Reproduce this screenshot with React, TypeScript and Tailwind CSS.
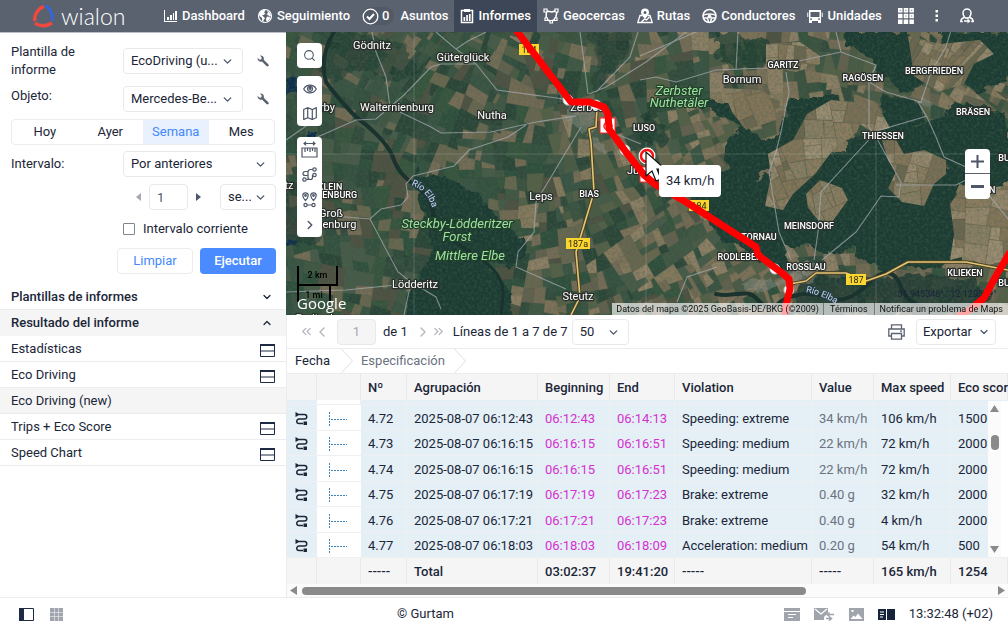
import { useState } from "react";
import type { ReactNode } from "react";
import { ChevronDown, ChevronUp, ChevronLeft, ChevronRight, ChevronsLeft, ChevronsRight, Search } from "lucide-react";

interface NavItem {
  label: string;
  icon: ReactNode;
  count?: number;
}

interface Row {
  no: string;
  time: string;
  start: string;
  end: string;
  violation: string;
  value: string;
  speed: string;
  score: string;
}

interface MapLabel {
  text: string;
  x: number;
  y: number;
  kind: "town" | "district" | "park";
}

const rows: Row[] = [
  { no: "4.72", time: "2025-08-07 06:12:43", start: "06:12:43", end: "06:14:13", violation: "Speeding: extreme", value: "34 km/h", speed: "106 km/h", score: "1500" },
  { no: "4.73", time: "2025-08-07 06:16:15", start: "06:16:15", end: "06:16:51", violation: "Speeding: medium", value: "22 km/h", speed: "72 km/h", score: "2000" },
  { no: "4.74", time: "2025-08-07 06:16:15", start: "06:16:15", end: "06:16:51", violation: "Speeding: medium", value: "22 km/h", speed: "72 km/h", score: "2000" },
  { no: "4.75", time: "2025-08-07 06:17:19", start: "06:17:19", end: "06:17:23", violation: "Brake: extreme", value: "0.40 g", speed: "32 km/h", score: "2000" },
  { no: "4.76", time: "2025-08-07 06:17:21", start: "06:17:21", end: "06:17:23", violation: "Brake: extreme", value: "0.40 g", speed: "4 km/h", score: "2000" },
  { no: "4.77", time: "2025-08-07 06:18:03", start: "06:18:03", end: "06:18:09", violation: "Acceleration: medium", value: "0.20 g", speed: "54 km/h", score: "500" },
];

const headings = ["Nº", "Agrupación", "Beginning", "End", "Violation", "Value", "Max speed", "Eco score"];
const totals = ["-----", "Total", "03:02:37", "19:41:20", "-----", "-----", "165 km/h", "1254"];

const navItems: NavItem[] = [
  {
    label: "Dashboard",
    icon: (
      <svg width="14" height="14" viewBox="0 0 14 14" fill="currentColor">
        <path d="M0 1h1v11h12v1H0z" />
        <path d="M3 8h2v3H3zM6 6h2v5H6zM9 4h1v7H9zM11 2h2v9h-2z" />
      </svg>
    ),
  },
  {
    label: "Seguimiento",
    icon: (
      <svg width="16" height="16" viewBox="0 0 16 16">
        <circle cx="8" cy="8" r="6.5" fill="none" stroke="currentColor" strokeWidth="1.2" />
        <path
          fill="currentColor"
          d="M2 6l2-3 3-1.5 1.5 1L7 4.5 8.500 5.500 6.500 7 5 7.500 7 9 8 10.500 6.500 12v2L5 12.500V10L2.500 8zM10 2.500l3 2.500 1 3-1.500.5L11 7 9.500 6.500 11 5zM10 8.500l2.500.5 1 1-2.500 3-1.500.5-.5-2.500z"
        />
      </svg>
    ),
  },
  {
    label: "Asuntos",
    count: 0,
    icon: (
      <svg width="17" height="17" viewBox="0 0 17 17" fill="none" stroke="currentColor">
        <circle cx="8.5" cy="8.500" r="7.300" strokeWidth="1.300" />
        <path d="M5 8.500l2.500 2.500L12 6" strokeWidth="2" />
      </svg>
    ),
  },
  {
    label: "Informes",
    icon: (
      <svg width="14" height="16" viewBox="0 0 14 16">
        <path fill="none" stroke="currentColor" strokeWidth="1.500" d="M1.500 2.500h11v12h-11z" />
        <path fill="currentColor" d="M4 1h6v3H4zM3.500 9h1.700v4H3.500zM6.200 7h1.700v6H6.200zM8.900 6h1.700v7H8.900z" />
      </svg>
    ),
  },
  {
    label: "Geocercas",
    icon: (
      <svg width="16" height="16" viewBox="0 0 16 16" fill="none" stroke="currentColor">
        <path strokeWidth="1.500" d="M3.500 3L9 4l4-1.500 1 1L12.500 11 8 13.500 3 11z" />
        <path strokeWidth="1.200" fill="#5a6270" d="M1 1h3v3H1zM12 1h3v3h-3zM2 10h2.500v2.500H2zM11.500 10H14v2.500h-2.500zM7 12.500h2.500V15H7z" />
      </svg>
    ),
  },
  {
    label: "Rutas",
    icon: (
      <svg width="16" height="16" viewBox="0 0 16 16" fill="none" stroke="currentColor">
        <path strokeWidth="1.300" d="M5 7.500H3L.8 14.500h14.400L13 7.500h-2M4.500 14l3-3 2 1 3-3" />
        <path fill="currentColor" stroke="none" fillRule="evenodd" d="M8 .5a4 4 0 014 4C12 7 8 11 8 11S4 7 4 4.500a4 4 0 014-4zM8 3a1.500 1.500 0 100 3 1.500 1.500 0 000-3z" />
      </svg>
    ),
  },
  {
    label: "Conductores",
    icon: (
      <svg width="15" height="16" viewBox="0 0 15 16" fill="none" stroke="currentColor">
        <circle cx="7.500" cy="8" r="6.500" strokeWidth="1.600" />
        <path strokeWidth="1.500" d="M1 7.500c3-2 10-2 13 0M2 10h3.500l1 4M13 10H9.500l-1 4" />
        <circle cx="7.500" cy="8.500" r="1.500" fill="currentColor" />
      </svg>
    ),
  },
  {
    label: "Unidades",
    icon: (
      <svg width="16" height="16" viewBox="0 0 16 16" fill="currentColor">
        <path fillRule="evenodd" d="M2 2h12v11H2zM3.500 4v5h9V4zM3 10.500v1.200h2v-1.200zM11 10.500v1.200h2v-1.200z" />
        <path d="M2 12h3v3H2zM11 12h3v3h-3zM.3 4.500h1V9h-1zM14.700 4.500h1V9h-1z" />
      </svg>
    ),
  },
];

const results = [
  { label: "Estadísticas", split: true },
  { label: "Eco Driving", split: true },
  { label: "Eco Driving (new)", split: false },
  { label: "Trips + Eco Score", split: true },
  { label: "Speed Chart", split: true },
];

const labels: MapLabel[] = [
  { text: "Gödnitz", x: 86, y: 17, kind: "town" },
  { text: "Güterglück", x: 177, y: 29, kind: "town" },
  { text: "Walternienburg", x: 111, y: 79, kind: "town" },
  { text: "Barby", x: 35, y: 79, kind: "town" },
  { text: "Nutha", x: 206, y: 87, kind: "town" },
  { text: "Leps", x: 255, y: 168, kind: "town" },
  { text: "Zerbst", x: 300, y: 79, kind: "town" },
  { text: "Jütrichau", x: 364, y: 142, kind: "town" },
  { text: "Groß", x: 45, y: 185, kind: "town" },
  { text: "Rosenburg", x: 44, y: 196, kind: "town" },
  { text: "Lödderitz", x: 129, y: 256, kind: "town" },
  { text: "Steutz", x: 292, y: 268, kind: "town" },
  { text: "Bornum", x: 456, y: 51, kind: "town" },
  { text: "Breitenhagen", x: 42, y: 290, kind: "town" },
  { text: "tz", x: 3, y: 157, kind: "town" },
  { text: "BIAS", x: 303, y: 165, kind: "district" },
  { text: "LUSO", x: 358, y: 99, kind: "district" },
  { text: "KLEIN", x: 44, y: 158, kind: "district" },
  { text: "ROSENBURG", x: 45, y: 166, kind: "district" },
  { text: "GARITZ", x: 497, y: 36, kind: "district" },
  { text: "RAGÖSEN", x: 577, y: 49, kind: "district" },
  { text: "BERGFRIEDEN", x: 648, y: 42, kind: "district" },
  { text: "BRÄSEN", x: 687, y: 83, kind: "district" },
  { text: "THIESSEN", x: 597, y: 107, kind: "district" },
  { text: "MEINSDORF", x: 523, y: 197, kind: "district" },
  { text: "TORNAU", x: 473, y: 208, kind: "district" },
  { text: "RODLEBEN", x: 454, y: 228, kind: "district" },
  { text: "ROSSLAU", x: 520, y: 238, kind: "district" },
  { text: "KLIEKEN", x: 679, y: 244, kind: "district" },
  { text: "BUKO", x: 724, y: 129, kind: "district" },
  { text: "DÜBEN", x: 695, y: 161, kind: "district" },
  { text: "BURO", x: 724, y: 254, kind: "district" },
  { text: "Zerbster", x: 393, y: 63, kind: "park" },
  { text: "Nuthetäler", x: 393, y: 75, kind: "park" },
  { text: "Steckby-Lödderitzer", x: 171, y: 196, kind: "park" },
  { text: "Forst", x: 171, y: 209, kind: "park" },
  { text: "Mittlere Elbe", x: 184, y: 228, kind: "park" },
];

const roads = [
  "M86 0l4 20 10 25 4 30",
  "M20 110l50-22 20-1 14-12 14-12 27-28 10-3h35l21 26 74 10 20 3",
  "M150 0l20 17 20 15M170 17l12-8L200 0",
  "M104 75l16 8 25 12 10 6 50-1 45-10 40-6",
  "M240 93l-18 12-39 13-15 16-41 10-7 8 2 13-7 8-20 4-11 10-49-4",
  "M84 187l28 53 13 10-7 33M125 250l25 15 5 12",
  "M295 95l-33 55-12 20-2 30-16 20-2 15 50 22",
  "M0 260l60-2 50-5",
  "M303 62l17-7 40-25 40-30M302 62l-4-32-4-30M310 60l34-35 8-25",
  "M0 108l36-25",
  "M354 48l16-3 20 5 40-12 50-2 75-16 35 13-7 17v45l4 5 54-16",
  "M590 100l-55 60-3 40-4 28",
  "M590 33l-7 17 17 10 35 10 10-30 15-25 12-40",
  "M641 85l9 20 8 20 22 10 42 52",
  "M590 105l25 45-2 15-18-1-25 36-34 28",
  "M500 40l3 20-8 40-5 20-7 20 10 60 12 28",
  "M550 0l5 20M354 24L410 0",
  "M610 153h60l20-10M636 71l-4-1 9 15",
  "M325 100l30 12M450 38l2-38M431 235l-30 10-10 25",
];

// Small seeded generator so the fields stay the same on every render
function makeRandom(seed: number) {
  let s = seed;
  return () => {
    s = (s * 1664525 + 1013904223) % 4294967296;
    return s / 4294967296;
  };
}

type Point = [number, number];
type Field = { points: string; fill: string };

const darkFields = ["#324a3c", "#2b4537", "#3a5343", "#415743", "#2f4f3c", "#485a48", "#37543d", "#6a674f", "#776c56", "#4f5141", "#35503f"];
const lightFields = ["#87795d", "#756a53", "#8f7f65", "#3c523f", "#4b5a44", "#7f7158", "#64614e", "#566047"];
const tanFields = ["#8c7c60", "#96866b", "#857559", "#7c6f56", "#9c8c71", "#8a7e63", "#6d6750"];

function splitField(poly: Point[], size: number, rnd: () => number, pick: (x: number) => string[], out: Field[]) {
  if (poly.length < 3) return;
  const xs = poly.map((p) => p[0]);
  const ys = poly.map((p) => p[1]);
  const w = Math.max(...xs) - Math.min(...xs);
  const h = Math.max(...ys) - Math.min(...ys);
  const cx = xs.reduce((a, b) => a + b, 0) / xs.length;
  const cy = ys.reduce((a, b) => a + b, 0) / ys.length;
  if (Math.max(w, h) < size * (0.6 + rnd() * 1.2)) {
    const palette = pick(cx);
    out.push({
      points: poly.map((p) => p[0].toFixed(1) + "," + p[1].toFixed(1)).join(" "),
      fill: palette[Math.floor(rnd() * palette.length)],
    });
    return;
  }
  const tilt = 0.35 * Math.sin(cx / 90) + 0.25 * Math.cos(cy / 60);
  const angle = (w > h * (0.7 + rnd() * 0.5) ? Math.PI / 2 : 0) + tilt + (rnd() - 0.5) * 0.4;
  const dx = Math.cos(angle);
  const dy = Math.sin(angle);
  const ox = cx + (rnd() - 0.5) * w * 0.35;
  const oy = cy + (rnd() - 0.5) * h * 0.35;
  const side = (p: Point) => (p[0] - ox) * dy - (p[1] - oy) * dx;
  const a: Point[] = [];
  const b: Point[] = [];
  poly.forEach((p, i) => {
    const q = poly[(i + 1) % poly.length];
    const sp = side(p);
    const sq = side(q);
    (sp >= 0 ? a : b).push(p);
    if (sp >= 0 !== sq >= 0) {
      const t = sp / (sp - sq);
      const m: Point = [p[0] + (q[0] - p[0]) * t, p[1] + (q[1] - p[1]) * t];
      a.push(m);
      b.push(m);
    }
  });
  splitField(a, size, rnd, pick, out);
  splitField(b, size, rnd, pick, out);
}

const bounds: Point[] = [[-10, -10], [732, -10], [732, 293], [-10, 293]];

const fields: Field[] = [];
const fieldRandom = makeRandom(41);
splitField(
  bounds,
  17,
  fieldRandom,
  (x) => (x > 215 && fieldRandom() < (x > 400 ? 0.75 : 0.4) ? lightFields : darkFields),
  fields
);

const clearings: Field[] = [];
splitField(bounds, 22, makeRandom(7), () => tanFields, clearings);

const labelStyles = {
  town: "fill-white stroke-[#2a2f2b] text-[11px]",
  district: "fill-white stroke-[#2a2f2b] text-[9px] font-medium",
  park: "fill-[#9be29f] stroke-[#23402b] text-[13px] italic",
};

function Terrain() {
  return (
    <svg className="h-full w-full" viewBox="0 0 722 283" preserveAspectRatio="xMidYMid slice" aria-label="Mapa">
      <defs>
        <filter id="rough" x="-5%" y="-5%" width="110%" height="110%">
          <feTurbulence type="fractalNoise" baseFrequency="0.07" numOctaves="3" seed="4" result="n" />
          <feDisplacementMap in="SourceGraphic" in2="n" scale="16" xChannelSelector="R" yChannelSelector="G" />
        </filter>
        <filter id="grain" x="0" y="0" width="100%" height="100%">
          <feTurbulence type="fractalNoise" baseFrequency="0.35" numOctaves="3" seed="8" />
          <feColorMatrix values="0 0 0 0 0.06  0 0 0 0 0.13  0 0 0 0 0.09  0 1.6 0 0 -0.6" />
        </filter>
        <clipPath id="clearing">
          <path d="M482 122l25-14 14-26 24-14 24 2 8 14-6 16-24 18-18 24-22 20-10 16-18-4 6-30z" />
          <path d="M596 108l14 0 8 14 20-4 22 10 0 14-12 10-10 22-22-4-14-14 8-16-8-12z" />
          <path d="M520 162l14-14 22 8 6 12-16 22-14-2-10-12z" />
          <path d="M664 172l10-14 48-4v74l-24 6-18-10-16 4 4-26z" />
          <path d="M480 12l34-2 20 14 0 8-24 8-30-6z" />
          <path d="M568 62l22 8 14 26-18 4-18-12z" />
          <path d="M622 4l32 8 40-4 14 14-20 10-10 20-26 8-24-16z" />
          <path d="M436 56l38 2 20 12-4 18-30 10-14-18z" />
        </clipPath>
      </defs>
      <rect width="722" height="283" fill="#33483a" />
      <g>
        {fields.map((f, i) => (
          <polygon key={i} points={f.points} fill={f.fill} stroke={f.fill} strokeWidth="0.4" />
        ))}
      </g>
      <g filter="url(#rough)" fill="#1d3a31">
        <path d="M55 0l60 10 20 30-30 10-30-15-30 20L30 30z" opacity=".6" />
        <path d="M128 140l45 10 35 28 10 38-15 15 20 30 5 30H118l10-40 20-30-10-40z" />
        <path d="M205 195l25 5 10 18-14 20-20-10z" />
        <path d="M0 150l26 10 8 50-34 5z" opacity=".5" />
        <path d="M300 0h50l-15 30-20 30-12-5 10-30z" opacity=".5" />
        <path d="M425 65l28 8 12 18-10 4-22-12-20-10z" />
        <path d="M455 95l35 20-5 20-16 14 12 30 16 25 8 40-30-15-40-25-30-35 6-20 30-10-5-25z" />
        <path d="M505 65l40 0 20 10-10 25-30 10-25 20-30 15 5-30 20-15z" />
        <path d="M560 0h60l15 12 12 40-30 8-20-15-10-20-25-10z" />
        <path d="M655 0h67v50l-30 8-30-15z" />
        <path d="M430 0l40 5 30 20-30 12-40-10z" opacity=".7" />
        <path d="M600 62l30 8 10 20-40 15-12-12z" />
        <path d="M645 100l22-30 55 10v75l-40 2-22-14z" />
        <path d="M560 110l90-20 15 30-12 15-28-10-50 25z" />
        <path d="M470 150l50-25 50-10 30 30 0 40-20 25-30 10-60-10-8-25z" />
        <path d="M590 130l80 10 5 60 0 30-80 8-25-15 0-45z" />
        <path d="M515 240l60 10 50-8 60 4 20 20-30 17H505z" opacity=".85" />
        <path d="M355 85l30 5-10 25-20-10z" opacity=".7" />
      </g>
      <g clipPath="url(#clearing)" strokeWidth="0.4">
        {clearings.map((f, i) => (
          <polygon key={i} points={f.points} fill={f.fill} stroke="#6b634b" />
        ))}
      </g>
      <path filter="url(#rough)" fill="#0d2f4c" d="M0 45l10 4 2 10-6 8-8-4zM22 100h10v8H22zM0 205l12 6-12 4z" />
      <g fill="#8b8f88" opacity=".5" filter="url(#rough)">
        <path d="M283 72l12-4 12 8 4 22-6 10-8-12-14-8zM305 105l10 2 8 14-12-2zM270 48l12 20-8 2z" />
        <path d="M496 238l22-8 24 2-6 10-34 14zM455 255l30-12 20 4-30 14zM637 64l8 4-2 8-8-2z" />
      </g>
      <rect width="722" height="283" filter="url(#grain)" opacity=".6" />
      <g fill="none" stroke="#1b332f" strokeLinejoin="round" strokeLinecap="round">
        <path strokeWidth="4" d="M48 0c-12 20-12 36-8 50 10 14 20 25 30 35 14 10 30 25 36 38 5 15 12 22 22 30 12 8 18 14 19 30" />
        <path strokeWidth="3" d="M147 180c4 20 22 30 40 42 16 10 30 20 30 40l-2 22" />
        <path strokeWidth="4" d="M430 262c20 4 30-6 40 4s14 14 22 6 30-14 46-7 32 0 45-14 26-14 32 4 30 28 60 22" />
      </g>
      <g fill="none" stroke="#a9adb3" strokeWidth="1.100" opacity=".7">
        {roads.map((d) => (
          <path key={d} d={d} />
        ))}
      </g>
      <path d="M128 0v283M360 110v173M590 100v183M0 122h722" stroke="#d5dcd5" strokeWidth=".5" opacity=".4" />
      <g fill="none" strokeLinejoin="round">
        <path stroke="#4d4022" strokeWidth="3.500" d="M311 75l-1 20-7 2 2 13 3 50-18 60 4 45-9 18M504 252l16-3 10-8h30l20 8 20-7 22-12h58l42 8" />
        <path stroke="#e3c778" strokeWidth="1.600" d="M311 75l-1 20-7 2 2 13 3 50-18 60 4 45-9 18M504 252l16-3 10-8h30l20 8 20-7 22-12h58l42 8" />
      </g>
      <g>
        {[
          { t: "184", x: 243, y: 18, w: 20 },
          { t: "184", x: 413, y: 174, w: 20 },
          { t: "187", x: 570, y: 248, w: 20 },
          { t: "187a", x: 292, y: 212, w: 24 },
        ].map((b) => (
          <g key={b.x}>
            <rect x={b.x - b.w / 2} y={b.y - 6} width={b.w} height="11" fill="#fbd62f" />
            <text x={b.x} y={b.y + 3} textAnchor="middle" className="fill-[#29250f] text-[9px]">
              {b.t}
            </text>
          </g>
        ))}
      </g>
      <g textAnchor="middle" strokeWidth="2.500" strokeLinejoin="round" paintOrder="stroke">
        {labels.map((l) => (
          <text key={l.text} x={l.x} y={l.y} className={labelStyles[l.kind]}>
            {l.text}
          </text>
        ))}
      </g>
      <path id="elbe-w" d="M125 153q22 8 23 34" fill="none" />
      <path id="elbe-e" d="M520 260q16 3 34 14" fill="none" />
      <g strokeWidth="2" paintOrder="stroke" className="fill-[#c3dcf0] stroke-[#2a3f48] text-[9px]">
        <text>
          <textPath href="#elbe-w">Río Elba</textPath>
        </text>
        <text>
          <textPath href="#elbe-e">Río Elba</textPath>
        </text>
      </g>
      <text x="661" y="265" textAnchor="middle" className="fill-[#17233a] text-[9px]">
        51.945348° : 12.129539°
      </text>
      <g fill="#fff" stroke="#c9ccd2">
        <circle cx="282" cy="68" r="5" />
        <circle cx="310" cy="73" r="5" />
        <circle cx="339" cy="118" r="5" />
        <circle cx="489" cy="237" r="5" />
        <circle cx="503" cy="258" r="5" />
      </g>
      <g fill="#fff" stroke="#ff2020">
        <rect x="314" y="86" width="15" height="15" />
        <rect x="354" y="135" width="15" height="15" />
        <circle cx="322" cy="94" r="4" fill="none" strokeWidth="1.500" />
      </g>
      <g fill="none" stroke="#f00" strokeWidth="7" strokeLinejoin="round">
        <path d="M230-2l55 72 18 0 15 5 4 7 1 15 17 23 18 23 12 10 30 17 42 27 28 18 2 8 24 18 7 6 1 10-4 16-1 12" />
        <path d="M724 220l-14 24-12 22-13 11-14 8" />
      </g>
      <circle cx="361" cy="124" r="8.500" fill="#fff" />
      <circle cx="361" cy="124" r="6" fill="none" stroke="#ff1010" strokeWidth="2.500" />
      <path d="M360 120v24l6-5 4 10 5-2-4-10h8z" fill="#fff" stroke="#111" strokeWidth="1.200" />
    </svg>
  );
}

function Select({ id, label, value, className }: { id?: string; label?: string; value: string; className: string }) {
  return (
    <div className={"relative " + className}>
      <select
        id={id}
        aria-label={label}
        className="h-[26px] w-full appearance-none rounded border border-[#e8e9eb] bg-white pr-6 pl-[7px] text-[13px] leading-4"
      >
        <option>{value}</option>
      </select>
      <ChevronDown className="pointer-events-none absolute top-[7px] right-[9px] text-[#4d5768]" size={13} strokeWidth={2.5} />
    </div>
  );
}

function Wrench({ label }: { label: string }) {
  return (
    <button type="button" aria-label={label} className="ml-[14px] text-[#5a6272]">
      <svg width="12" height="12" viewBox="0 0 12 12" fill="currentColor">
        <path d="M3 .5a3.300 3.300 0 013.700 4.300l4.600 4.400a1.300 1.300 0 01-1.900 1.900L5 6.600A3.300 3.300 0 01.6 3L2.700 4.700 4.400 4.200 4.700 2.500z" />
      </svg>
    </button>
  );
}

function SplitIcon() {
  return (
    <svg width="15" height="13" viewBox="0 0 15 13" fill="none" stroke="#1f2a44">
      <path d="M.5 1h14v11.500H.5zM.5 7h14" />
      <path d="M0 1h15" strokeWidth="2" />
    </svg>
  );
}

function Header() {
  const [active, setActive] = useState("Informes");
  return (
    <header className="flex h-8 shrink-0 items-center bg-[#5a6270] text-[13px] text-white">
      <a href="#" aria-label="Wialon" className="flex w-[158px] shrink-0 items-center pl-8">
        <svg width="23" height="24" viewBox="0 0 23 24" fill="none">
          <path d="M12 2.500C6 4 1.500 12 3 17" stroke="#f0473e" strokeWidth="3.500" />
          <path d="M13 2c5 1 8.500 9 7 15" stroke="#2f66f0" strokeWidth="2.500" />
          <path d="M3 19c4 3.500 12 3.500 17 0" stroke="#f0473e" strokeWidth="3.500" />
        </svg>
        <span className="ml-[6px] font-['Lato',sans-serif] text-[23px] leading-8 font-light">wialon</span>
      </a>
      <nav className="flex h-full">
        {navItems.map((item) => (
          <button
            key={item.label}
            onClick={() => setActive(item.label)}
            className={`flex h-full items-center gap-1 px-[6px] font-medium ${active === item.label ? "bg-[#3d4657]" : ""}`}
          >
            {item.count !== undefined ? (
              <span className="mr-[2px] flex items-center gap-[3px] rounded-full bg-[#525a68] pr-[5px]">
                {item.icon}
                {item.count}
              </span>
            ) : (
              item.icon
            )}
            {item.label}
          </button>
        ))}
      </nav>
      <div className="ml-auto flex items-center gap-[21px] pr-[34px]">
        <button aria-label="Aplicaciones">
          <svg width="16" height="16" viewBox="0 0 16 16" fill="currentColor">
            <path d="M0 0h4.500v4.500H0zM5.700 0h4.500v4.500H5.700zM11.400 0h4.500v4.500h-4.500zM0 5.700h4.500v4.500H0zM5.700 5.700h4.500v4.500H5.700zM11.400 5.700h4.500v4.500h-4.500zM0 11.400h4.500v4.500H0zM5.700 11.400h4.500v4.500H5.700zM11.400 11.400h4.500v4.500h-4.500z" />
            <path fill="#5a6270" d="M1.700 1.700h1v1h-1zM7.400 1.700h1v1h-1zM13.200 1.700h1v1h-1zM7.400 7.400h1v1h-1zM13.200 7.400h1v1h-1z" />
          </svg>
        </button>
        <button aria-label="Más">
          <svg width="4" height="12" viewBox="0 0 4 12" fill="currentColor">
            <path d="M.5 0h2.500v2.500H.5zM.5 4.500h2.500V7H.5zM.5 9h2.500v2.500H.5z" />
          </svg>
        </button>
        <button aria-label="Usuario">
          <svg width="14" height="16" viewBox="0 0 14 16" fill="none" stroke="currentColor" strokeWidth="1.500">
            <path d="M7 1a4 4 0 014 4c0 2-1 3.500-1.500 4.200 2.500 1 3.700 2.300 3.700 4.300h-2M7 1a4 4 0 00-4 4c0 2 1 3.500 1.500 4.200C2 10.200.8 11.500.8 13.500h2M4.500 9.300c1.500 1 3.500 1 5 0" />
            <path d="M4 13h4" />
            <path d="M7.500 10.500l3 2.500-3 2.500z" fill="currentColor" stroke="none" />
          </svg>
        </button>
      </div>
    </header>
  );
}

function Sidebar() {
  const [period, setPeriod] = useState("Semana");
  return (
    <aside className="flex w-[286px] shrink-0 flex-col border-t border-[#b9bdc5]">
      <form className="pt-[10px] pr-[10px] pb-[10px] pl-[11px]" onSubmit={(e) => e.preventDefault()}>
        <div className="flex items-center">
          <label htmlFor="template" className="w-28 pr-8 leading-[18px]">
            Plantilla de informe
          </label>
          <Select id="template" value="EcoDriving (u..." className="w-[120px]" />
          <Wrench label="Editar plantilla" />
        </div>
        <div className="mt-[7px] flex items-center">
          <label htmlFor="unit" className="w-28 pb-[6px] leading-[18px]">
            Objeto:
          </label>
          <Select id="unit" value="Mercedes-Be..." className="w-[120px]" />
          <Wrench label="Editar objeto" />
        </div>
        <div className="mt-[7px] flex h-[26px] w-[264px] overflow-hidden rounded border border-[#ececee]">
          {["Hoy", "Ayer", "Semana", "Mes"].map((p) => (
            <button
              key={p}
              type="button"
              onClick={() => setPeriod(p)}
              className={`flex-1 ${period === p ? "bg-[#e9f0fe] text-[#4489fb]" : ""}`}
            >
              {p}
            </button>
          ))}
        </div>
        <div className="mt-[6px] flex items-center">
          <label htmlFor="interval" className="w-28">
            Intervalo:
          </label>
          <Select id="interval" value="Por anteriores" className="w-[153px]" />
        </div>
        <div className="mt-[7px] flex items-center pl-[125px]">
          <button type="button" aria-label="Menos" className="text-[#a5a9b0]">
            <svg width="5" height="8" viewBox="0 0 5 8" fill="currentColor">
              <path d="M5 0v8L0 4z" />
            </svg>
          </button>
          <input
            aria-label="Cantidad"
            defaultValue="1"
            className="ml-2 h-[26px] w-[39px] rounded border border-[#e8e9eb] px-[7px] text-[#4d5768]"
          />
          <button type="button" aria-label="Más" className="ml-2 text-[#4d5768]">
            <svg width="5" height="8" viewBox="0 0 5 8" fill="currentColor">
              <path d="M0 0v8l5-4z" />
            </svg>
          </button>
          <Select label="Unidad de tiempo" value="se..." className="ml-[19px] w-[57px]" />
        </div>
        <label className="mt-[10px] flex items-center gap-2 pl-28 leading-[18px]">
          <input type="checkbox" className="size-3 appearance-none rounded-[1px] border border-[#7f8591] bg-white" />
          Intervalo corriente
        </label>
        <div className="mt-[10px] flex justify-end gap-[7px]">
          <button type="button" className="h-[26px] w-[76px] rounded border border-[#ececee] text-[#4489fb]">
            Limpiar
          </button>
          <button type="submit" className="h-[26px] w-[76px] rounded bg-[#4a8cff] font-medium text-white">
            Ejecutar
          </button>
        </div>
      </form>
      <button className="flex h-[26px] items-center justify-between border-b border-[#ececee] pr-[13px] pl-[11px] font-medium">
        Plantillas de informes
        <ChevronDown size={12} strokeWidth={2.5} />
      </button>
      <button className="flex h-[26px] items-center justify-between bg-[#f5f5f5] pr-[13px] pl-[11px] font-medium">
        Resultado del informe
        <ChevronUp size={12} strokeWidth={2.5} />
      </button>
      <ul>
        {results.map((r) => (
          <li
            key={r.label}
            className={`flex h-[26px] items-center justify-between border-b border-[#ececee] pr-[11px] pl-[11px] ${r.split ? "" : "bg-[#f5f5f5]"}`}
          >
            <a href="#">{r.label}</a>
            {r.split && (
              <span className="pt-1">
                <SplitIcon />
              </span>
            )}
          </li>
        ))}
      </ul>
    </aside>
  );
}

function MapPanel() {
  const tool = "flex h-[25px] w-[25px] items-center justify-center";
  return (
    <section className="relative min-h-0 flex-1 overflow-hidden bg-[#33483a]">
      <div className="absolute inset-0">
        <Terrain />
      </div>
      <div className="absolute top-[11px] left-[11px] flex flex-col text-[#4d5768]">
        <button aria-label="Buscar" className={tool + " rounded bg-white"}>
          <Search size={13} strokeWidth={2} />
        </button>
        <div className="mt-2 rounded bg-white">
          <button aria-label="Visibilidad" className={tool}>
            <svg width="14" height="10" viewBox="0 0 14 10" fill="none" stroke="currentColor" strokeWidth="1.200">
              <path d="M.7 5C3.500-.2 10.500-.2 13.300 5 10.500 10.200 3.500 10.200.7 5z" />
              <circle cx="7" cy="4.800" r="2.500" />
              <circle cx="7" cy="4.300" r="1" fill="currentColor" />
            </svg>
          </button>
          <button aria-label="Capas" className={tool}>
            <svg width="14" height="13" viewBox="0 0 14 13" fill="none" stroke="currentColor" strokeWidth="1.200">
              <path d="M.7 2.500l4-1.800 4.600 1.800 4-1.800v10l-4 1.800-4.600-1.800-4 1.800zM4.700.7v10M9.300 2.500v10" />
            </svg>
          </button>
        </div>
        <div className="mt-[11px] rounded bg-white">
          <button aria-label="Regla" className={tool}>
            <svg width="17" height="17" viewBox="0 0 17 17" fill="none" stroke="currentColor" strokeWidth="1.200">
              <path d="M3 2.500h11M5 .7L3 2.500l2 1.800M12 .7l2 1.800-2 1.800M1 7h15v9H1zM4 7v4M6.500 7v3M9 7v4M11.500 7v3M14 7v4" />
            </svg>
          </button>
          <button aria-label="Ruta" className={tool}>
            <svg width="15" height="15" viewBox="0 0 15 15" fill="none" stroke="currentColor" strokeWidth="1.200">
              <circle cx="12.500" cy="2.500" r="1.700" />
              <circle cx="12.500" cy="8" r="1.700" />
              <circle cx="2.500" cy="12.500" r="1.700" />
              <path d="M10.800 2.500H8.500A2.500 2.500 0 006 5v5.500a2 2 0 002 2h.5a2 2 0 002-2V8M6 4.500H3a2 2 0 00-2 2 2 2 0 002 2h3M4.200 12.500H8" />
            </svg>
          </button>
          <button aria-label="Puntos" className={tool}>
            <svg width="15" height="16" viewBox="0 0 15 16" fill="none" stroke="currentColor" strokeWidth="1.200">
              <path d="M3.500 8.500C1.500 6.500.8 5 .8 3.500a2.700 2.700 0 015.400 0c0 1.500-.7 3-2.700 5zM11.500 8.500c-2-2-2.700-3.500-2.700-5a2.700 2.700 0 015.400 0c0 1.500-.7 3-2.700 5zM5 13h5" />
              <circle cx="3.500" cy="3.500" r=".8" />
              <circle cx="11.500" cy="3.500" r=".8" />
              <circle cx="3.500" cy="13" r="1.600" />
              <circle cx="11.500" cy="13" r="1.600" />
            </svg>
          </button>
          <button aria-label="Más herramientas" className={tool}>
            <ChevronRight size={14} strokeWidth={2.5} />
          </button>
        </div>
      </div>
      <div className="absolute top-[117px] right-[18px] flex w-[25px] flex-col divide-y divide-[#5a6272] rounded bg-white text-[#4d5768]">
        <button aria-label="Acercar" className="flex h-[25px] items-center justify-center">
          <svg width="13" height="13" viewBox="0 0 13 13" fill="currentColor">
            <path d="M5.500 0h2v5.500H13v2H7.500V13h-2V7.500H0v-2h5.500z" />
          </svg>
        </button>
        <button aria-label="Alejar" className="flex h-[25px] items-center justify-center">
          <svg width="13" height="3" viewBox="0 0 13 3" fill="currentColor">
            <path d="M0 0h13v3H0z" />
          </svg>
        </button>
      </div>
      <div className="absolute top-[133px] left-[373px] rounded bg-white px-[7px] py-[7px] leading-[18px]">34 km/h</div>
      <div className="absolute bottom-[3px] left-[11px] flex flex-col items-start text-black">
        <div className="h-5 w-[41px] border-x-2 border-b-2 border-black text-center text-[9px] leading-[18px] font-medium">2 km</div>
        <div className="h-4 w-[34px] border-x-2 border-black text-center text-[9px] leading-[18px] font-medium">1 mi</div>
        <span className="-mt-2 font-['Open_Sans',sans-serif] text-[15px] leading-[18px] text-white">Google</span>
      </div>
      <div className="absolute right-0 bottom-0 flex h-3 bg-white/65 text-[9px] leading-3 whitespace-nowrap text-[#111]">
        <span className="px-1">Datos del mapa ©2025 GeoBasis-DE/BKG (©2009)</span>
        <a href="#" className="border-l border-[#777] px-[6px]">
          Términos
        </a>
        <a href="#" className="border-l border-[#777] px-[5px]">
          Notificar un problema de Maps
        </a>
      </div>
    </section>
  );
}

function Pager() {
  return (
    <div className="flex h-[34px] shrink-0 items-center border-b border-[#ececee] pr-3 pl-3">
      <button aria-label="Primera página" className="text-[#b3b6bc]">
        <ChevronsLeft size={15} />
      </button>
      <button aria-label="Página anterior" className="text-[#b3b6bc]">
        <ChevronLeft size={16} />
      </button>
      <input
        aria-label="Página"
        defaultValue="1"
        disabled
        className="ml-[7px] h-[26px] w-[39px] rounded border border-[#e8e9eb] bg-[#f5f5f5] text-center text-[#a5a9b0]"
      />
      <span className="ml-[7px]">de 1</span>
      <button aria-label="Página siguiente" className="ml-[7px] text-[#b3b6bc]">
        <ChevronRight size={16} />
      </button>
      <button aria-label="Última página" className="text-[#b3b6bc]">
        <ChevronsRight size={15} />
      </button>
      <span className="ml-[7px]">Líneas de 1 a 7 de 7</span>
      <Select label="Líneas por página" value="50" className="ml-1 w-[57px]" />
      <button aria-label="Imprimir" className="ml-auto text-[#5a6272]">
        <svg width="17" height="16" viewBox="0 0 17 16" fill="none" stroke="currentColor" strokeWidth="1.300">
          <path d="M3.500 5V.8h10V5M3.500 12H.8V5h15.400v7h-2.700M3.500 9.500h10v5.700h-10zM12 7.200h2" />
        </svg>
      </button>
      <button className="ml-[11px] flex h-[26px] items-center gap-[6px] rounded border border-[#e8e9eb] pr-[5px] pl-[6px]">
        Exportar
        <ChevronDown size={12} strokeWidth={2.5} className="text-[#4d5768]" />
      </button>
    </div>
  );
}

function Crumb() {
  return (
    <svg width="13" height="26" viewBox="0 0 13 26" fill="none" stroke="#dfe0e3">
      <path d="M.5 0l12 13-12 13" />
    </svg>
  );
}

function ReportTable() {
  const cell = "border-r border-b border-[#eef0f2] pl-[7px]";
  return (
    <div className="relative shrink-0 overflow-hidden">
      <table className="w-full table-fixed border-separate border-spacing-0 text-left whitespace-nowrap [&_td]:pt-[2px] [&_td]:pb-0 [&_th]:pt-[2px]">
        <colgroup>
          <col className="w-[30px]" />
          <col className="w-11" />
          <col className="w-[46px]" />
          <col className="w-[131px]" />
          <col className="w-[72px]" />
          <col className="w-[65px]" />
          <col className="w-[137px]" />
          <col className="w-[62px]" />
          <col className="w-[77px]" />
          <col />
        </colgroup>
        <thead className="bg-[#f5f5f5]">
          <tr className="h-[26px]">
            <th className="border-r border-[#e9e9eb]" />
            <th className="border-r border-[#e9e9eb]" />
            {headings.map((h) => (
              <th key={h} className="border-r border-[#e9e9eb] pl-[7px] font-medium">
                {h}
              </th>
            ))}
          </tr>
        </thead>
        <tbody className="bg-[#e4eff6]">
          <tr className="h-[5px]" aria-hidden="true">
            {[...Array(10)].map((_, i) => (
              <td key={i} className={`border-r border-b border-[#eef0f2] ${i === 1 ? "bg-white" : ""}`} />
            ))}
          </tr>
          {rows.map((r) => (
            <tr key={r.no} className="odd:h-[25px] even:h-[26px]">
              <td className="border-b border-[#eef0f2] pl-2">
                <svg width="13" height="14" viewBox="0 0 13 14" fill="none" stroke="#1b2638" strokeWidth="1.500">
                  <path d="M4 2.500h5.500a2.200 2.200 0 010 4.500H4a2.200 2.200 0 000 4.500h4" />
                  <path d="M.5 0L5 2.500.5 5zM8.500 9.500H12V13H8.500z" fill="#1b2638" stroke="none" />
                </svg>
              </td>
              <td className="border-b border-[#eef0f2] bg-white pl-3">
                <svg width="18" height="14" viewBox="0 0 18 14" fill="none" stroke="#3b83b8">
                  <path d="M.5 0v14M2 7.500h16" strokeDasharray="2 1" />
                </svg>
              </td>
              <td className={cell}>{r.no}</td>
              <td className={cell}>{r.time}</td>
              <td className={cell + " text-[#d530d0]"}>{r.start}</td>
              <td className={cell + " text-[#d530d0]"}>{r.end}</td>
              <td className={cell}>{r.violation}</td>
              <td className={cell + " text-[#6b7280]"}>{r.value}</td>
              <td className={cell}>{r.speed}</td>
              <td className="border-b border-[#eef0f2] pl-[7px]">{r.score}</td>
            </tr>
          ))}
        </tbody>
        <tfoot className="bg-[#f5f5f5] font-medium">
          <tr className="h-[26px]">
            <td className="border-r border-[#e9e9eb]" />
            <td className="border-r border-[#e9e9eb]" />
            {totals.map((t, i) => (
              <td key={i} className="border-r border-[#e9e9eb] pl-[7px]">
                {t}
              </td>
            ))}
          </tr>
        </tfoot>
      </table>
      <div className="absolute top-[27px] right-0 bottom-[27px] flex w-5 bg-white text-[#8a8a8a]">
        <div className="flex w-[13px] flex-col items-center bg-[#fbfbfb] py-1">
          <svg width="9" height="7" viewBox="0 0 9 7" fill="currentColor">
            <path d="M4.500 0L9 7H0z" />
          </svg>
          <div className="mt-[23px] h-[15px] w-2 rounded bg-[#8a8a8a]" />
          <svg width="9" height="7" viewBox="0 0 9 7" fill="currentColor" className="mt-auto">
            <path d="M4.500 7L9 0H0z" />
          </svg>
        </div>
      </div>
    </div>
  );
}

function Footer() {
  return (
    <footer className="flex h-[33px] shrink-0 items-center border-t border-[#ececee] pr-[15px]">
      <div className="flex w-[397px] items-center gap-4 pl-[19px]">
        <button aria-label="Panel lateral">
          <svg width="15" height="13" viewBox="0 0 15 13" fill="none" stroke="#1f2a44">
            <path d="M.5.5h14v12H.5z" />
            <path d="M0 0h5v13H0z" fill="#1f2a44" stroke="none" />
          </svg>
        </button>
        <button aria-label="Cuadrícula">
          <svg width="13" height="13" viewBox="0 0 13 13" fill="#a0a4ad">
            <path d="M0 0h4v4H0zM4.500 0h4v4h-4zM9 0h4v4H9zM0 4.500h4v4H0zM4.500 4.500h4v4h-4zM9 4.500h4v4H9zM0 9h4v4H0zM4.500 9h4v4h-4zM9 9h4v4H9z" />
          </svg>
        </button>
      </div>
      <a href="#">© Gurtam</a>
      <div className="ml-auto flex items-center gap-[14px]">
        <button aria-label="Registro">
          <svg width="16" height="13" viewBox="0 0 16 13" fill="#a0a4ad">
            <path fillRule="evenodd" d="M0 0h16v3H0zM0 4h16v9H0zM4 6v1h8V6zM4 9v1h5V9z" />
          </svg>
        </button>
        <button aria-label="Mensajes">
          <svg width="21" height="13" viewBox="0 0 21 13" fill="none" stroke="#a0a4ad">
            <path d="M0 0h14v5l-4 4v3H0z" fill="#a0a4ad" stroke="none" />
            <path d="M1 1l6 5 6-5" stroke="#fff" strokeWidth="1.200" />
            <path d="M13 6.500h7M15.500 4.500l-2.500 2 2.500 2M12 10.500h5M15 8.500l2.500 2-2.500 2" strokeWidth="1.500" />
          </svg>
        </button>
        <button aria-label="Imágenes">
          <svg width="15" height="13" viewBox="0 0 15 13" fill="#a0a4ad">
            <path fillRule="evenodd" d="M0 0h15v13H0zM1.500 11h12L9 5.500 6.500 9 4.500 7.500zM2.500 2v2h2V2z" />
          </svg>
        </button>
        <button aria-label="Vista dividida">
          <svg width="17" height="11" viewBox="0 0 17 11">
            <path fill="#17233a" fillRule="evenodd" d="M0 0h8v11H0zM2 2.500v1h4v-1zM2 5v1h4V5zM2 7.500v1h3v-1zM9 0h8v11H9z" />
          </svg>
        </button>
        <span>13:32:48 (+02)</span>
      </div>
    </footer>
  );
}

export default function App() {
  return (
    <div className="flex h-screen flex-col overflow-hidden bg-white font-['Roboto',sans-serif] text-[13px] leading-[18px] text-[#1b2638]">
      <Header />
      <div className="flex min-h-0 flex-1">
        <Sidebar />
        <main className="flex min-w-0 flex-1 flex-col">
          <MapPanel />
          <section className="shrink-0 border-l border-[#ececee]">
            <Pager />
            <nav className="flex h-[25px] items-center overflow-hidden border-b border-[#ececee] pl-2">
              <a href="#">Fecha</a>
              <span className="mr-2 ml-[10px]">
                <Crumb />
              </span>
              <a href="#" className="text-[#6b7280]">
                Especificación
              </a>
              <span className="ml-2">
                <Crumb />
              </span>
            </nav>
            <ReportTable />
            <div className="flex h-[13px] items-center gap-[5px] bg-[#fbfbfb] px-[3px] text-[#8a8a8a]">
              <svg width="7" height="9" viewBox="0 0 7 9" fill="currentColor">
                <path d="M7 0v9L0 4.500z" />
              </svg>
              <div className="flex-1">
                <div className="h-2 w-[73%] rounded bg-[#8a8a8a]" />
              </div>
              <svg width="7" height="9" viewBox="0 0 7 9" fill="currentColor">
                <path d="M0 0v9l7-4.500z" />
              </svg>
            </div>
          </section>
        </main>
      </div>
      <Footer />
    </div>
  );
}
